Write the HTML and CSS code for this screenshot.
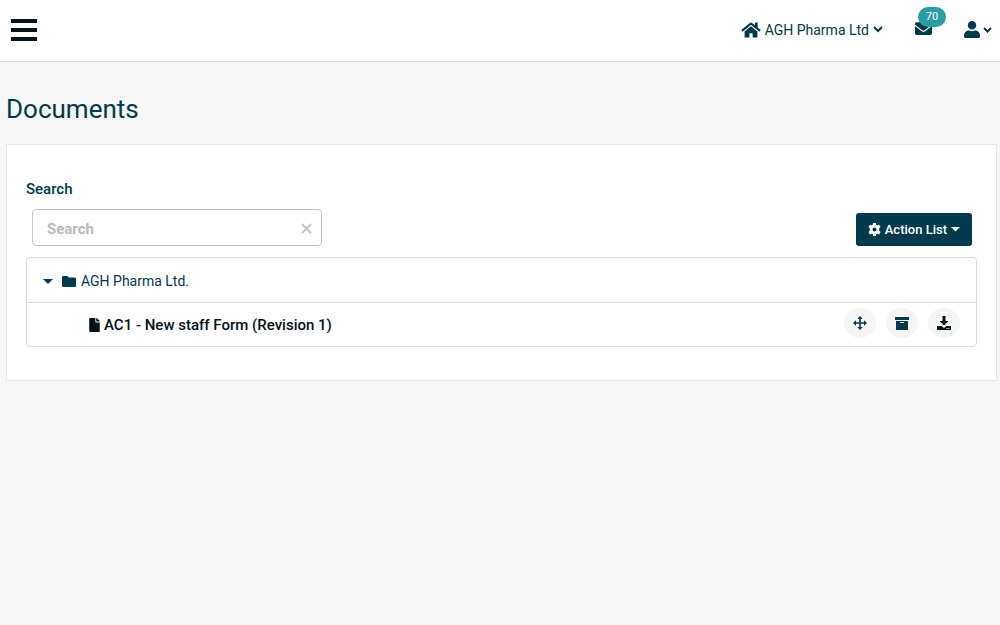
FILE: index.html
```
<!DOCTYPE html>
<html lang="en">

<head>
    <meta charset="UTF-8">
    <meta name="viewport" content="width=device-width, initial-scale=1.0">
    <title>Documents</title>
    <link rel="stylesheet" href="styles.css">
</head>

<body>
    <header class="topbar">
        <button type="button" class="menu-toggle" aria-label="Menu">
            <svg width="26" height="22" viewBox="0 0 26 22"><path d="M0 0h26v4H0zM0 9h26v4H0zM0 18h26v4H0z"/></svg>
        </button>
        <nav class="topbar-nav">
            <a href="#" class="company-link">
                <svg width="20" height="16" viewBox="0 0 576 480"><path d="M280 132L96 284v164a16 16 0 0 0 16 16h112a16 16 0 0 0 16-16v-96a16 16 0 0 1 16-16h64a16 16 0 0 1 16 16v96a16 16 0 0 0 16 16h112a16 16 0 0 0 16-16V283L296 132a12 12 0 0 0-16 0zm292 104l-84-69V28a12 12 0 0 0-12-12h-56a12 12 0 0 0-12 12v73l-90-74a48 48 0 0 0-61 0L4 236a12 12 0 0 0-1 16l25 31a12 12 0 0 0 17 2L280 91a12 12 0 0 1 15 0l235 194a12 12 0 0 0 17-2l26-31a12 12 0 0 0-1-16z"/></svg>
                <span>AGH Pharma Ltd</span>
                <svg width="10" height="7" viewBox="0 0 10 7"><path class="chevron" d="M1 1l4 4 4-4"/></svg>
            </a>
            <a href="#" class="mail-link" aria-label="Messages">
                <svg width="17" height="13" viewBox="0 0 512 384"><path d="M502 127c4-3 10 0 10 5v204a48 48 0 0 1-48 48H48a48 48 0 0 1-48-48V132c0-5 6-8 10-5 22 18 52 40 154 114 21 15 57 47 92 47s72-33 92-47c102-74 132-96 154-114zM256 256c23 0 56-29 73-41 133-97 143-105 174-129 6-5 9-12 9-19V48a48 48 0 0 0-48-48H48A48 48 0 0 0 0 48v19c0 7 3 14 9 19 31 24 41 32 174 129 17 12 50 41 73 41z"/></svg>
                <span class="badge">70</span>
            </a>
            <a href="#" class="user-link" aria-label="Account">
                <svg width="16" height="17" viewBox="0 0 448 476" preserveAspectRatio="none"><path d="M224 238a119 119 0 1 0 0-238 119 119 0 0 0 0 238zm90 30h-17a174 174 0 0 1-146 0h-17A134 134 0 0 0 0 402v32a42 42 0 0 0 42 42h364a42 42 0 0 0 42-42v-32a134 134 0 0 0-134-134z"/></svg>
                <svg width="9" height="6" viewBox="0 0 9 6"><path class="chevron" d="M1 1l3.5 3.5L8 1"/></svg>
            </a>
        </nav>
    </header>

    <main>
        <h1>Documents</h1>
        <section class="card">
            <label class="search-label" for="search">Search</label>
            <div class="toolbar">
                <div class="search-box">
                    <input type="text" id="search" placeholder="Search">
                    <button type="button" class="clear-btn" aria-label="Clear">
                        <svg width="11" height="11" viewBox="0 0 11 11"><path d="M1 1l9 9M10 1l-9 9"/></svg>
                    </button>
                </div>
                <button type="button" class="action-btn">
                    <svg width="13" height="13" viewBox="0 0 16 16"><path fill-rule="evenodd" d="M6.300 0h3.400l.5 2.100 1.200.7 2.300-.8 1.700 2.900-1.600 1.500v3.200l1.600 1.500-1.700 2.900-2.300-.8-1.200.7-.5 2.100H6.300l-.5-2.100-1.200-.7-2.300.8L.6 11.100l1.600-1.500V6.400L.6 4.900 2.300 2l2.300.8 1.200-.7zM8 5.500a2.500 2.500 0 1 0 0 5 2.500 2.500 0 0 0 0-5z"/></svg>
                    <span>Action List</span>
                    <svg width="9" height="5" viewBox="0 0 9 5"><path d="M0 0h9L4.500 4.500z"/></svg>
                </button>
            </div>

            <ul class="tree">
                <li class="folder-row">
                    <svg class="caret" width="10" height="5" viewBox="0 0 10 5"><path d="M0 0h10L5 5z"/></svg>
                    <svg width="14" height="11" viewBox="0 0 14 11"><path d="M1.300 0H5l2 1.500h5.700A1.300 1.300 0 0 1 14 2.800v6.900A1.300 1.300 0 0 1 12.700 11H1.300A1.300 1.300 0 0 1 0 9.700V1.300A1.300 1.300 0 0 1 1.300 0z"/></svg>
                    <span>AGH Pharma Ltd.</span>
                </li>
                <li class="file-row">
                    <svg width="11" height="14" viewBox="0 0 384 512"><path d="M224 136V0H24A24 24 0 0 0 0 24v464a24 24 0 0 0 24 24h336a24 24 0 0 0 24-24V160H248a24 24 0 0 1-24-24zm160-14v6H256V0h6a24 24 0 0 1 17 7l98 98a24 24 0 0 1 7 17z"/></svg>
                    <span>AC1 - New staff Form (Revision 1)</span>
                    <div class="row-actions">
                        <button type="button" aria-label="Move">
                            <svg width="14" height="14" viewBox="0 0 14 14"><path d="M7 0l2.700 3H7.800v3.200H11V4.300L14 7l-3 2.700V7.800H7.800V11h1.900L7 14l-2.700-3h1.900V7.800H3v1.900L0 7l3-2.700v1.900h3.200V3H4.300z"/></svg>
                        </button>
                        <button type="button" aria-label="Archive">
                            <svg width="14" height="13" viewBox="0 0 14 13"><path fill-rule="evenodd" d="M0 0h14v3H0zM1 4h12v9H1zM5 5v1h4V5z"/></svg>
                        </button>
                        <button type="button" class="download" aria-label="Download">
                            <svg width="14" height="14" viewBox="0 0 14 14"><path fill-rule="evenodd" d="M5.500 0h3v5h3L7 9.500 2.500 5h3zM0 10h4.500L7 12l2.500-2H14v4H0zM9.500 12v1h1v-1zM11.500 12v1h1v-1z"/></svg>
                        </button>
                    </div>
                </li>
            </ul>
        </section>
    </main>
</body>

</html>
```
FILE: styles.css
```
* {
    box-sizing: border-box;
}

body {
    margin: 0;
    background-color: #f6f6f6;
    color: #003a4d;
    font-family: Roboto, sans-serif;
    font-size: 14px;
    line-height: 20px;
}

svg {
    display: block;
    flex: none;
    fill: currentColor;
}

button {
    border: none;
    padding: 0;
    color: inherit;
    font-family: inherit;
    cursor: pointer;
}

a {
    color: inherit;
    text-decoration: none;
}

.chevron {
    fill: none;
    stroke: currentColor;
    stroke-width: 2;
}

/* Top bar */
.topbar {
    display: flex;
    align-items: center;
    justify-content: space-between;
    height: 62px;
    padding: 0 8px 2px 11px;
    background-color: #fff;
    border-bottom: 1px solid #d8dadb;
}

.menu-toggle {
    background: none;
    color: #00121a;
}

.topbar-nav {
    display: flex;
    align-items: center;
    gap: 32px;
}

.company-link,
.user-link {
    display: flex;
    align-items: center;
    gap: 4px;
}

.user-link {
    gap: 3px;
}

.mail-link {
    position: relative;
}

.mail-link svg {
    margin-bottom: 2px;
}

.badge {
    position: absolute;
    top: -15px;
    left: 3px;
    width: 28px;
    border-radius: 10px;
    background-color: #2b9ca3;
    color: #fff;
    font-size: 11px;
    text-align: center;
}

h1 {
    margin: 0;
    padding: 32px 6px 20px;
    font-size: 26px;
    font-weight: 400;
    line-height: 30px;
}

/* Documents card */
.card {
    margin: 0 3px 0 6px;
    padding: 34px 19px 33px;
    background-color: #fff;
    border: 1px solid #e4e6ea;
}

.search-label {
    display: block;
    margin-bottom: 10px;
    font-size: 15px;
    font-weight: 500;
}

.toolbar {
    display: flex;
    align-items: center;
    justify-content: space-between;
    padding: 0 4px 0 6px;
    margin-bottom: 11px;
}

.search-box {
    position: relative;
    width: 290px;
}

.search-box input {
    display: block;
    width: 100%;
    height: 37px;
    padding: 2px 36px 0 14px;
    border: 1px solid #c4c4c4;
    border-radius: 4px;
    background-color: #fff;
    color: #003a4d;
    font-family: inherit;
    font-size: 15px;
    font-weight: 700;
}

.search-box input::placeholder {
    color: #b9b9b9;
}

.clear-btn {
    position: absolute;
    top: 14px;
    right: 10px;
    background: none;
    color: #c4c4c4;
}

.clear-btn svg {
    stroke: currentColor;
    stroke-width: 2;
}

.action-btn {
    display: flex;
    align-items: center;
    gap: 4px;
    height: 33px;
    margin-top: 4px;
    margin-right: 1px;
    padding: 0 12px;
    border-radius: 3px;
    background-color: #003a4d;
    color: #fff;
    font-size: 13px;
    font-weight: 500;
}

/* Folder tree */
.tree {
    margin: 0;
    padding: 0;
    list-style: none;
    border: 1px solid #d9dadb;
    border-radius: 4px;
}

.folder-row,
.file-row {
    display: flex;
    align-items: center;
    gap: 5px;
    height: 45px;
}

.folder-row {
    padding: 2px 16px 0;
    border-bottom: 1px solid #d9dadb;
}

.caret {
    margin-right: 4px;
}

.file-row {
    gap: 4px;
    height: 43px;
    padding: 0 16px 0 62px;
    color: #00121a;
    font-size: 15px;
    font-weight: 500;
}

.row-actions {
    display: flex;
    gap: 10px;
    margin-left: auto;
    padding-bottom: 3px;
}

.row-actions button {
    display: flex;
    align-items: center;
    justify-content: center;
    width: 32px;
    height: 30px;
    border-radius: 50%;
    background-color: #f5f5f5;
    color: #003a4d;
}

.row-actions .download {
    color: #00121a;
}
```
